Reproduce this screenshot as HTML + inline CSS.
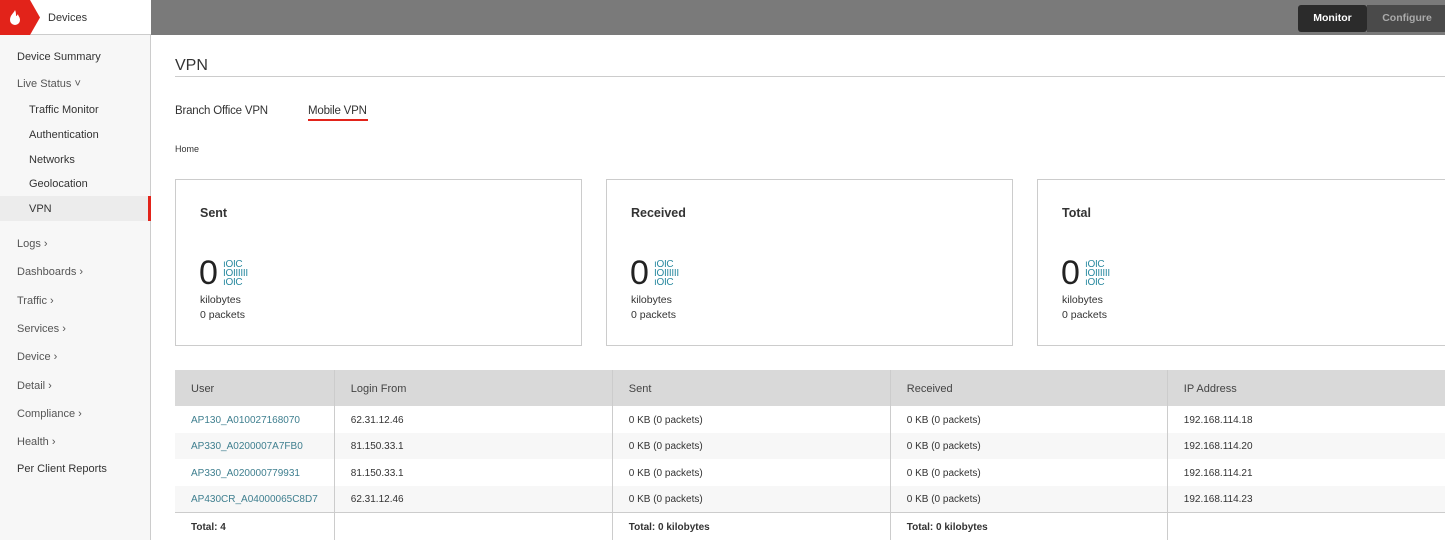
<!DOCTYPE html>
<html><head><style>
*{box-sizing:border-box;margin:0;padding:0}
body{width:1445px;height:540px;overflow:hidden;font-family:"Liberation Sans",sans-serif;font-size:11px;color:#333;background:#fff;position:relative}
.side{position:absolute;left:0;top:0;width:151px;height:540px;background:#f7f7f7;border-right:1px solid #ccc}
.hdr{position:absolute;left:0;top:0;width:151px;height:35px;background:#fff;border-bottom:1px solid #ccc}
.logo{position:absolute;left:0;top:0;width:40px;height:35px;background:#e2231a;clip-path:polygon(0 0,30px 0,40px 17.5px,30px 35px,0 35px)}
.top{position:absolute;left:151px;top:0;right:0;height:35px;background:#7a7a7a}
.nav{position:absolute;font-size:11px;color:#333}
.btn{position:absolute;top:5px;height:27px;font-weight:bold;font-size:10.5px;line-height:27px;text-align:center}
.card{position:absolute;top:179px;height:167px;border:1px solid #ccc;background:#fff}
.card h3{position:absolute;left:24px;top:26px;font-size:12.5px;font-weight:bold;color:#333}
.card .big{position:absolute;left:23px;top:74px;font-size:34px;font-weight:300;color:#222}
.card .kb{position:absolute;left:24px;top:113px;font-size:10.5px;line-height:15px}
.card .ic{position:absolute;left:47px;top:80px;color:#2a8aa0;font-size:10px;line-height:9px;font-family:"Liberation Sans",sans-serif;letter-spacing:-0.3px}
table{position:absolute;left:175px;top:370px;width:1275px;border-collapse:collapse;font-size:10px}
td{border-left:1px solid #ccc;padding:2px 16px 0;height:26.5px}
td:first-child{border-left:none}
thead td{background:#d9d9d9;height:36px;font-size:11px;color:#444}
tbody tr:nth-child(even) td{background:#f7f7f7}
tfoot td{border-top:1px solid #ccc;font-weight:bold;height:28px}
a{color:#3f7f8f;text-decoration:none}
</style></head><body>
<div class="side">
<div class="nav" style="left:17px;top:51px">Device Summary</div>
<div class="nav" style="left:17px;top:78px;color:#555">Live Status ˅</div>
<div class="nav" style="left:29px;top:104px">Traffic Monitor</div>
<div class="nav" style="left:29px;top:129px">Authentication</div>
<div class="nav" style="left:29px;top:154px">Networks</div>
<div class="nav" style="left:29px;top:178px">Geolocation</div>
<div style="position:absolute;left:0;top:196px;width:151px;height:25px;background:#ececec;border-right:3px solid #e2231a"></div>
<div class="nav" style="left:29px;top:203px">VPN</div>
<div class="nav" style="left:17px;top:238px;color:#555">Logs ›</div>
<div class="nav" style="left:17px;top:266px;color:#555">Dashboards ›</div>
<div class="nav" style="left:17px;top:295px;color:#555">Traffic ›</div>
<div class="nav" style="left:17px;top:323px;color:#555">Services ›</div>
<div class="nav" style="left:17px;top:351px;color:#555">Device ›</div>
<div class="nav" style="left:17px;top:380px;color:#555">Detail ›</div>
<div class="nav" style="left:17px;top:408px;color:#555">Compliance ›</div>
<div class="nav" style="left:17px;top:436px;color:#555">Health ›</div>
<div class="nav" style="left:17px;top:463px">Per Client Reports</div>
</div>
<div class="hdr"><div class="logo"><svg width="30" height="35" viewBox="0 0 30 35"><path d="M15 10c-1 3-5 5-5 10a5 5 0 0 0 10 0c0-3-2-4-2-6-1 2-2 2-2 2 0-2 0-4-1-6z" fill="#fff"/></svg></div>
<div class="nav" style="left:48px;top:12px">Devices</div></div>
<div class="top">
<div class="btn" style="left:1147px;width:69px;background:#2b2b2b;color:#fff;border-radius:3px">Monitor</div>
<div class="btn" style="left:1216px;width:80px;background:#4a4a4a;color:#aaa">Configure</div>
</div>
<div style="position:absolute;left:175px;top:57px;font-size:16px;color:#333">VPN</div>
<div style="position:absolute;left:175px;top:76px;width:1270px;border-top:1px solid #ccc"></div>
<div style="position:absolute;left:175px;top:105px;font-size:11.5px;letter-spacing:-0.2px">Branch Office VPN</div>
<div style="position:absolute;left:308px;top:105px;font-size:11.5px;letter-spacing:-0.2px">Mobile VPN</div>
<div style="position:absolute;left:308px;top:119px;width:60px;height:2px;background:#e2231a"></div>
<div style="position:absolute;left:175px;top:144px;font-size:9px">Home</div>
<div class="card" style="left:175px;width:407px"><h3>Sent</h3><div class="big">0</div><div class="ic">ıOIC<br>IOIIIIII<br>ıOIC</div><div class="kb">kilobytes<br>0 packets</div></div>
<div class="card" style="left:606px;width:407px"><h3>Received</h3><div class="big">0</div><div class="ic">ıOIC<br>IOIIIIII<br>ıOIC</div><div class="kb">kilobytes<br>0 packets</div></div>
<div class="card" style="left:1037px;width:420px"><h3>Total</h3><div class="big">0</div><div class="ic">ıOIC<br>IOIIIIII<br>ıOIC</div><div class="kb">kilobytes<br>0 packets</div></div>
<table>
<colgroup><col style="width:157px"><col style="width:278px"><col style="width:278px"><col style="width:277px"><col></colgroup>
<thead><tr><td>User</td><td>Login From</td><td>Sent</td><td>Received</td><td>IP Address</td></tr></thead>
<tbody>
<tr><td><a>AP130_A010027168070</a></td><td>62.31.12.46</td><td>0 KB (0 packets)</td><td>0 KB (0 packets)</td><td>192.168.114.18</td></tr>
<tr><td><a>AP330_A0200007A7FB0</a></td><td>81.150.33.1</td><td>0 KB (0 packets)</td><td>0 KB (0 packets)</td><td>192.168.114.20</td></tr>
<tr><td><a>AP330_A020000779931</a></td><td>81.150.33.1</td><td>0 KB (0 packets)</td><td>0 KB (0 packets)</td><td>192.168.114.21</td></tr>
<tr><td><a>AP430CR_A04000065C8D7</a></td><td>62.31.12.46</td><td>0 KB (0 packets)</td><td>0 KB (0 packets)</td><td>192.168.114.23</td></tr>
</tbody>
<tfoot><tr><td>Total: 4</td><td></td><td>Total: 0 kilobytes</td><td>Total: 0 kilobytes</td><td></td></tr></tfoot>
</table>
</body></html>
